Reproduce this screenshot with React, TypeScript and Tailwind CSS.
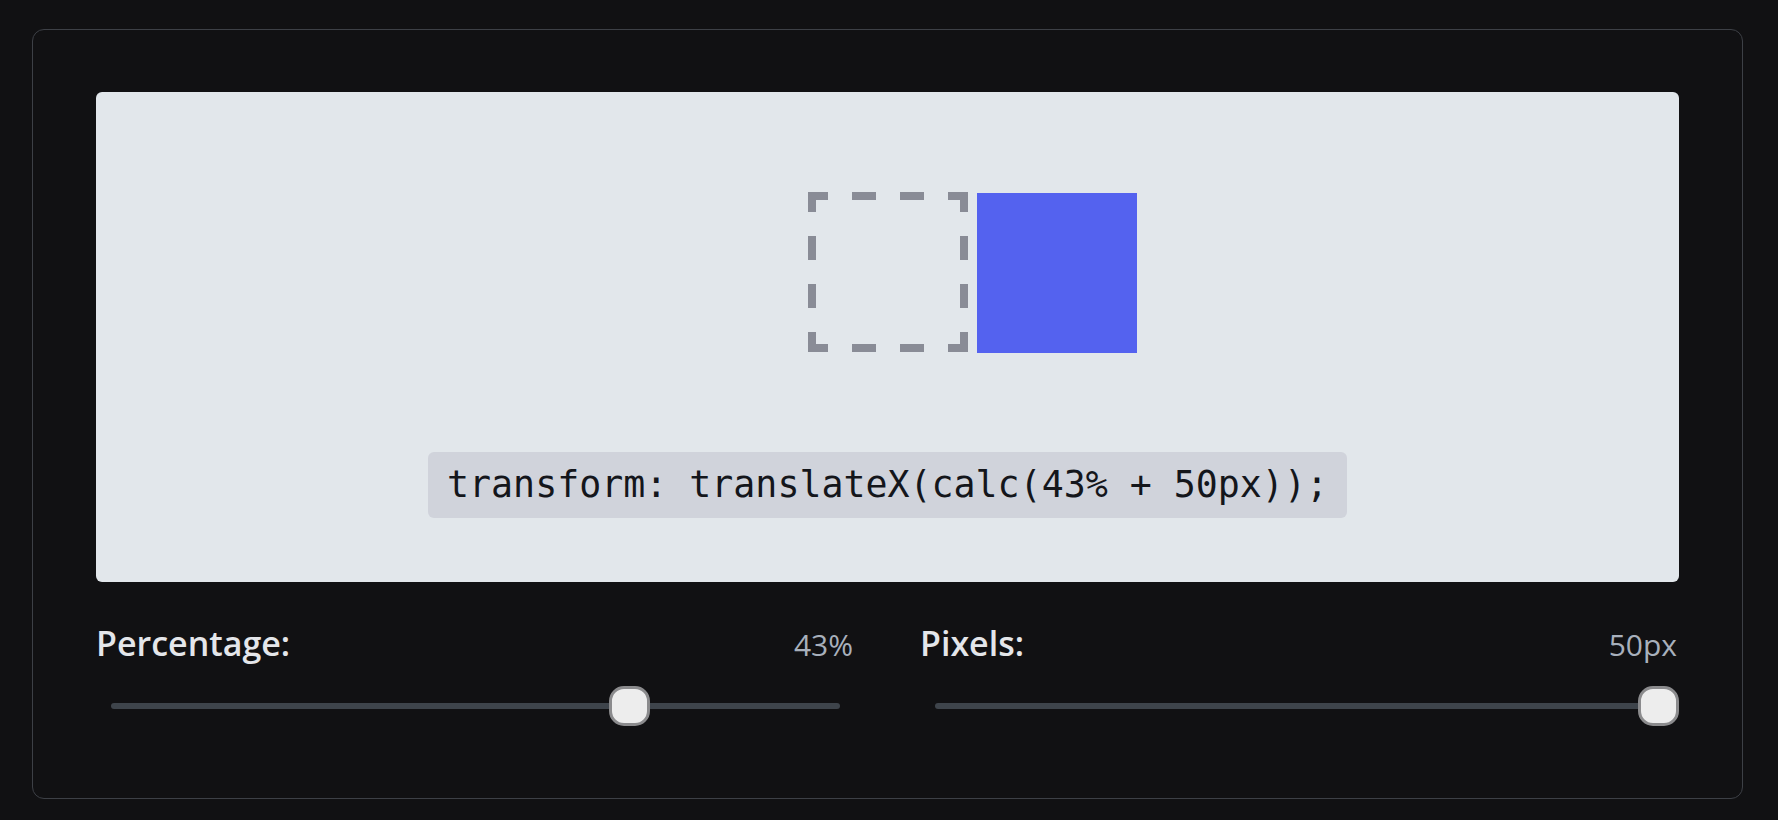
import React from 'react'

type SliderProps = {
  label: string
  display: string
  min: number
  max: number
  value: number
}

// thumb is 41px wide, track is inset so thumb can sit flush at the ends
function Slider({ label, display, min, max, value }: SliderProps) {
  const ratio = (value - min) / (max - min)

  return (
    <div className="flex flex-col">
      <div className="flex items-baseline justify-between h-[50px]">
        <span className="text-[34px] font-semibold text-[#e4e6ea]">{label}</span>
        <span className="text-[30px] text-[#a8b0bc] pr-[2px]">{display}</span>
      </div>
      <div className="relative mt-[18px] h-[40px] flex items-center">
        <div className="mx-[15px] h-[6px] w-full rounded-full bg-[#3e444b]" />
        <div
          className="absolute top-0 h-[40px] w-[41px] rounded-[15px] border-[3px] border-[#8b8b8d] bg-[#ededed]"
          style={{ left: `calc(${ratio} * (100% - 41px))` }}
        />
      </div>
    </div>
  )
}

// 8px dashed outline, drawn per side so the dash rhythm matches
function DashedBox() {
  const dash = '20 24 24 24 24 24 20 0'
  return (
    <svg width="160" height="160" viewBox="0 0 160 160" className="block">
      <g stroke="#898c96" strokeWidth="8" strokeDasharray={dash} fill="none">
        <line x1="0" y1="4" x2="160" y2="4" />
        <line x1="0" y1="156" x2="160" y2="156" />
        <line x1="4" y1="0" x2="4" y2="160" />
        <line x1="156" y1="0" x2="156" y2="160" />
      </g>
    </svg>
  )
}

export default function App() {
  return (
    <div className="min-h-[820px] bg-[#111113] pt-[29px] pl-[32px] pr-[35px] pb-[17px]" style={{ fontFamily: '"Open Sans", Lato, sans-serif' }}>
      <div className="rounded-[12px] border border-[#3d4046] px-[63px] pt-[62px] pb-[72px]">
        <div className="flex flex-col items-center rounded-[6px] bg-[#e2e7eb] pt-[100px] pb-[64px] gap-[100px]">
          <div className="relative h-[160px] w-[160px]">
            <DashedBox />
            <div className="absolute top-[1px] left-0 h-[160px] w-[160px] translate-x-[169px] bg-[#5462ef]" />
          </div>
          <div
            className="rounded-[6px] bg-[#d0d3db] px-[19px] py-[10px] text-[36.6px] leading-[46px] text-[#14161b]"
            style={{ fontFamily: '"DejaVu Sans Mono", "Liberation Mono", monospace' }}
          >
            transform: translateX(calc(43% + 50px));
          </div>
        </div>
        <div className="mt-[36px] grid grid-cols-2 gap-[65px]">
          <Slider label="Percentage:" display="43%" min={-100} max={100} value={43} />
          <Slider label="Pixels:" display="50px" min={-50} max={50} value={50} />
        </div>
      </div>
    </div>
  )
}
